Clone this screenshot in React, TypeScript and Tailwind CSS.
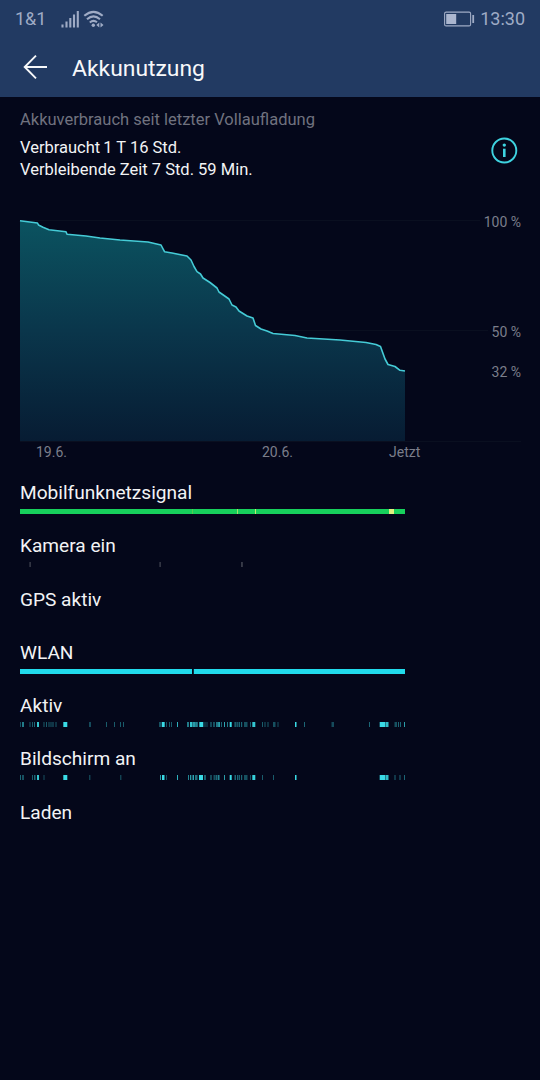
import type { ReactNode } from "react";

// x offset, width, opacity (all measured from the left edge of the chart)
type Mark = [number, number, number];

const CURVE: [number, number][] = [
  [0, 0.7], [17.5, 3], [18.5, 5], [23, 7.3], [29, 9.7], [46, 11.7], [47, 14.2], [66, 16],
  [80, 18], [100, 20], [128, 22], [141, 25], [144.5, 31.7], [152, 33], [167, 36], [171, 40],
  [174, 46.5], [177, 51.7], [180.5, 54], [183, 58], [190, 62.5], [197, 68], [199, 72],
  [209, 79], [212, 85], [216, 87], [219, 91], [227, 96], [233, 98], [235.5, 105.5],
  [241, 109], [247, 111], [253, 113.5], [275, 115.5], [287, 118], [320, 120], [346, 122.5],
  [356, 124.5], [360.5, 126.5], [365, 139], [368, 144.5], [375, 146.5], [380, 150.3], [385, 151],
];

const CAMERA: Mark[] = [[9.5, 1.2, 1], [139.5, 1.2, 1], [221.2, 1.5, 1]];

const ACTIVE: Mark[] = [
  [0, 1, 0.35], [2, 2, 0.55], [9.5, 1, 0.4], [12, 1, 0.4], [14, 1, 0.45], [17, 2, 0.9],
  [23.5, 1, 0.4], [26, 1, 0.4], [28.5, 1, 0.4], [30.5, 1, 0.4], [32.5, 1, 0.45], [35.5, 1, 0.4],
  [43.3, 4, 1], [69, 2, 0.32], [86, 1, 0.4], [94, 1, 0.4], [100, 1, 0.4], [103, 1, 0.4],
  [139.5, 1, 0.7], [141.7, 3, 1], [146, 1, 0.35], [149, 1, 0.4], [151, 1, 0.4], [157, 1, 0.8],
  [167, 2, 0.55], [170, 2, 0.9], [172.3, 3, 0.7], [175.3, 2.5, 0.6], [179.3, 4, 1],
  [184.5, 1, 0.4], [186.5, 1, 0.35], [190, 2, 0.3], [193, 2, 0.35], [196, 2, 0.5],
  [198.3, 1.5, 0.9], [201, 1, 0.45], [204, 1, 0.75], [207, 1, 0.55], [209.7, 2, 1],
  [214.5, 1.3, 0.5], [216.5, 1.3, 0.45], [218.7, 1, 0.65], [221, 1.2, 0.45], [224, 3.5, 0.35],
  [230, 1, 0.4], [232.3, 3, 0.9], [242, 1, 0.4], [244.5, 1, 0.4], [247.5, 1, 0.4],
  [253, 2.5, 0.35], [257.5, 1, 0.35], [275, 1.5, 1], [284, 1, 0.45], [311.5, 2.5, 0.32],
  [349, 1, 0.45], [359.7, 5.5, 1], [365.5, 3, 0.85], [374.5, 2.5, 0.35], [378, 1, 0.45],
  [380, 1, 0.45], [384, 1, 0.7],
];

const SCREEN_ON: Mark[] = [
  [0, 1, 0.45], [2, 2, 0.35], [12, 1, 0.4], [14, 1.5, 0.45], [17, 2, 0.9], [23.5, 1, 0.35],
  [43.3, 4, 1], [69.3, 1, 0.4], [100.3, 1, 0.4],
  [140, 1, 0.7], [142, 2.5, 1], [146, 1, 0.35], [157, 1, 0.8], [168, 1, 0.6], [170, 1.3, 0.7],
  [172.5, 1.5, 0.75], [175, 2.5, 0.5], [179, 4, 1], [184, 2, 0.4], [190, 2, 0.3],
  [193.5, 1.5, 0.35], [195.5, 2, 0.45], [198, 1.5, 0.6], [204, 1, 0.7], [209.7, 2, 1],
  [214.5, 1.5, 0.45], [217, 1, 0.45], [218.7, 1, 0.6], [221, 1.2, 0.45], [224, 3.5, 0.35],
  [230, 1, 0.35], [232.3, 3, 0.95], [242, 1, 0.4], [253, 1, 0.4], [275, 1.5, 1],
  [359.7, 5.5, 1], [365.5, 3, 0.85], [374.5, 1, 0.45], [379.5, 1, 0.45], [384, 1, 0.45],
];

function Marks({ marks, color }: { marks: Mark[]; color: string }) {
  return (
    <svg width="386" height="5" className="block">
      {marks.map(([x, w, o], i) => (
        <rect key={i} x={x} y="0" width={w} height="5" fill={color} opacity={o} />
      ))}
    </svg>
  );
}

function Row({ label, children }: { label: string; children?: ReactNode }) {
  return (
    <div className="h-[53.3px] pt-px">
      <div className="h-[27px] text-[19.1px] leading-[22px] text-[#f2f3f5]">{label}</div>
      {children}
    </div>
  );
}

function StatusBar() {
  return (
    <div className="flex h-[37px] items-center pl-[15px] pr-[15px] text-[#9fabc5]">
      <span className="w-[46px] text-[18px] leading-none">1&amp;1</span>
      <svg width="46" height="20" viewBox="61 8 46 20" fill="none" stroke="currentColor">
        <path d="M62.5 23.5V26.5M66.5 20.5V26.5M70.3 17V26.5M74 13.5V26.5M77.8 10V26.5" strokeWidth="2.1" />
        <path d="M84.3 14.8Q93.5 6.8 102.7 14.8M87 18.3Q93.5 12.6 100 18.3M89.8 21.5Q93.5 18.5 97 21.3" strokeWidth="2.1" />
        <circle cx="93.3" cy="24.3" r="1.7" fill="currentColor" stroke="none" />
        <path d="M99.3 21.5L96.3 24L99.3 26.5zM100.5 21.5L103.5 24L100.5 26.5z" fill="currentColor" stroke="none" />
      </svg>
      <svg width="32" height="16" className="ml-auto mr-[4px] -translate-x-px" viewBox="0 0 32 16" fill="none" stroke="currentColor">
        <rect x="1.6" y="1.1" width="26" height="13.8" rx="1.5" strokeWidth="1.1" />
        <rect x="3.2" y="3" width="10" height="10" fill="#abb6cf" stroke="none" />
        <path d="M30.2 4V12" strokeWidth="1.8" />
      </svg>
      <span className="text-[18px] leading-none">13:30</span>
    </div>
  );
}

function Chart() {
  const line = CURVE.map(([x, y]) => `${x} ${y}`).join("L");
  return (
    <div className="mt-[42px] flex h-[221px] text-[14px] leading-4 text-[#7b7e8b]">
      <svg width="460" height="222" viewBox="0 0 460 222" className="block shrink-0 overflow-visible">
        <defs>
          <linearGradient id="fill" x1="0" y1="0" x2="0" y2="221" gradientUnits="userSpaceOnUse">
            <stop offset="0" stopColor="#0b5360" />
            <stop offset="0.5" stopColor="#0a364b" />
            <stop offset="1" stopColor="#071c33" />
          </linearGradient>
        </defs>
        <path d="M0 .5H460M0 110.5H468M0 221.5H501" stroke="#0a0f20" />
        <path d={`M${line}V221H0Z`} fill="url(#fill)" />
        <path d={`M${line}`} fill="none" stroke="#45cbd6" strokeWidth="1.6" strokeLinejoin="round" />
      </svg>
      <div className="flex flex-1 flex-col items-end pr-[19px] whitespace-nowrap">
        <span className="-mt-[6px]">100 %</span>
        <span className="mt-[94px]">50 %</span>
        <span className="mt-[24px]">32 %</span>
      </div>
    </div>
  );
}

export default function App() {
  return (
    <div className="h-[1080px] w-[540px] overflow-hidden bg-[#04071a] font-['Roboto',sans-serif]">
      <header className="h-[97px] bg-[#223a62]">
        <StatusBar />
        <div className="flex h-[60px] items-center pl-[23px] text-[#f7f8fa]">
          <svg width="26" height="26" viewBox="0 0 26 26" fill="none" stroke="currentColor" strokeWidth="1.9">
            <path d="M24 13H2M13 1.7L1.7 13L13 24.3" />
          </svg>
          <h1 className="ml-[23px] pt-[3px] text-[22.9px] leading-7">Akkunutzung</h1>
        </div>
      </header>

      <main className="pl-5 pt-[13px]">
        <div className="text-[16.5px] leading-5 text-[#70727f]">
          Akkuverbrauch seit letzter Vollaufladung
        </div>
        <div className="flex h-[48px] items-start justify-between pr-[22px] pt-[7px]">
          <div className="text-[16.5px] leading-[22px] text-[#f2f3f5]">
            <div>Verbraucht<span className="ml-[3px]">1 T 16 Std.</span></div>
            <div>Verbleibende Zeit 7 Std. 59 Min.</div>
          </div>
          <svg width="28" height="28" viewBox="0 0 28 28" fill="none" stroke="#3ed3e0" strokeWidth="1.9">
            <circle cx="14.3" cy="13.5" r="12" />
            <circle cx="14.3" cy="8.1" r="1.7" fill="#3ed3e0" stroke="none" />
            <path d="M14.3 11.7V20" strokeWidth="2.6" />
          </svg>
        </div>

        <Chart />

        <div className="mt-px flex h-5 text-[14px] leading-5 text-[#7b7e8b]">
          <span className="ml-[16px] w-[226px]">19.6.</span>
          <span className="w-[127px]">20.6.</span>
          <span>Jetzt</span>
        </div>

        <div className="mt-[19px]">
          <Row label="Mobilfunknetzsignal">
            <svg width="385" height="5" className="block">
              <rect width="385" height="5" fill="#17d05c" />
              <rect x="172" width="1" height="5" fill="#53cf50" />
              <rect x="217" width="1" height="5" fill="#a0e36a" />
              <rect x="235" width="1" height="5" fill="#c0ed70" />
              <rect x="369" width="5" height="5" fill="#e0f080" />
            </svg>
          </Row>
          <Row label="Kamera ein">
            <Marks marks={CAMERA} color="#454854" />
          </Row>
          <Row label="GPS aktiv" />
          <Row label="WLAN">
            <Marks marks={[[0, 172, 1], [173.8, 211.2, 1]]} color="#21dbec" />
          </Row>
          <Row label="Aktiv">
            <Marks marks={ACTIVE} color="#3adbe6" />
          </Row>
          <Row label="Bildschirm an">
            <Marks marks={SCREEN_ON} color="#3adbe6" />
          </Row>
          <Row label="Laden" />
        </div>
      </main>
    </div>
  );
}
